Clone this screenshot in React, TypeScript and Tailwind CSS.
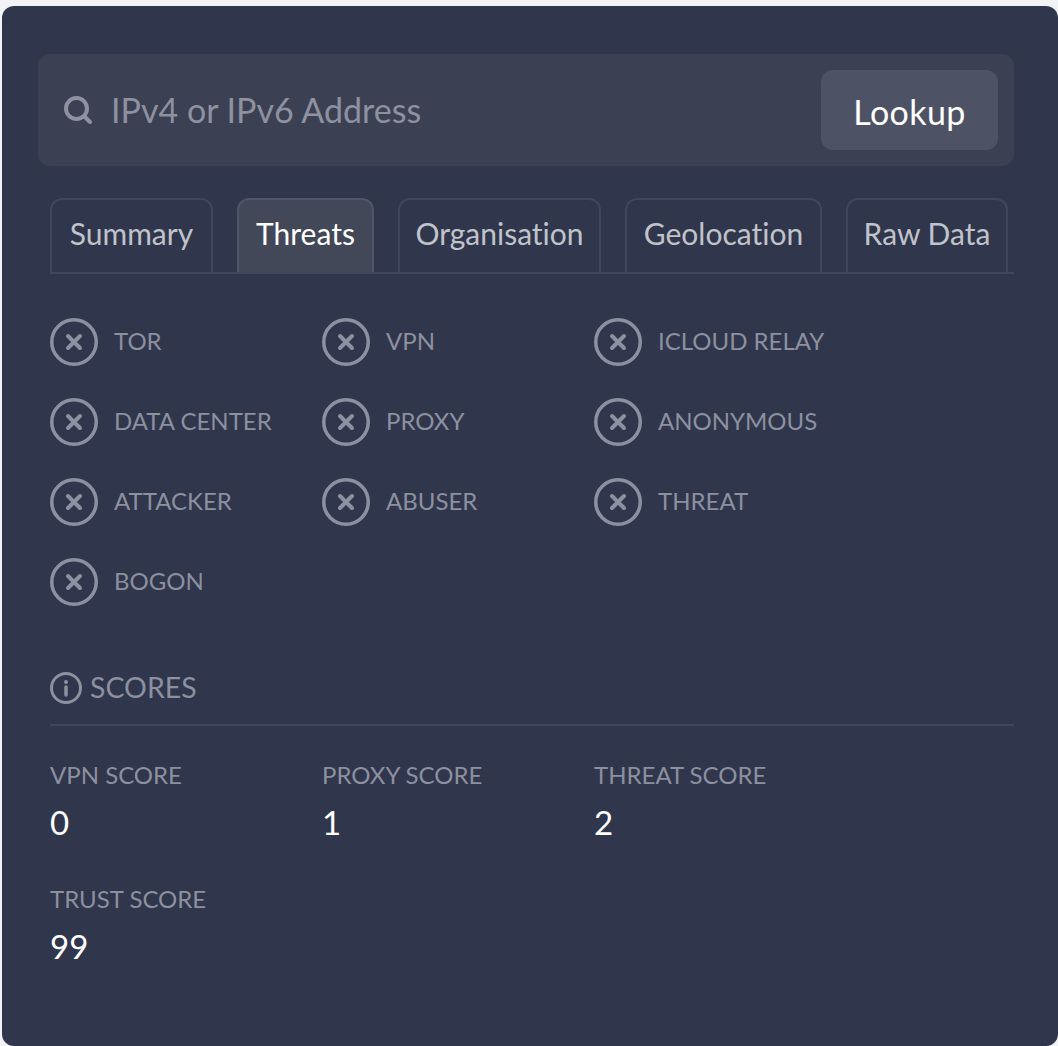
const FONT = "font-['Lato',sans-serif] [font-variant-ligatures:none]";

const tabs = [
  { name: 'Summary', width: 'w-[163px]' },
  { name: 'Threats', width: 'w-[137px]' },
  { name: 'Organisation', width: 'w-[203px]' },
  { name: 'Geolocation', width: 'w-[197px]' },
  { name: 'Raw Data', width: 'w-[162px]' },
];

const threats = [
  'TOR', 'VPN', 'ICLOUD RELAY',
  'DATA CENTER', 'PROXY', 'ANONYMOUS',
  'ATTACKER', 'ABUSER', 'THREAT',
  'BOGON',
];

const scores = [
  { label: 'VPN SCORE', value: 0 },
  { label: 'PROXY SCORE', value: 1 },
  { label: 'THREAT SCORE', value: 2 },
  { label: 'TRUST SCORE', value: 99 },
];

function CrossIcon() {
  return (
    <svg width="48" height="48" viewBox="0 0 48 48" fill="none" stroke="#8c909f" className="shrink-0">
      <circle cx="24" cy="24" r="22.25" strokeWidth="3.5" />
      <path d="M18 18l12 12M30 18L18 30" strokeWidth="4" strokeLinecap="round" />
    </svg>
  );
}

export default function App() {
  return (
    <div className={`${FONT} h-[1046px] w-[1058px] overflow-hidden bg-[#f1f3f7] pl-[2px] pt-[6px]`}>
      <div className="h-[1040px] rounded-[12px] bg-[#30364c] pl-[36px] pr-[44px] pt-[48px]">
        <div className="flex h-[112px] items-center justify-between rounded-[12px] bg-[#3b4053] pl-[26px] pr-[16px]">
          <div className="flex items-center gap-[19px]">
            <svg width="28" height="28" viewBox="0 0 28 28" fill="none" stroke="#8e919f" strokeWidth="4" strokeLinecap="round">
              <circle cx="12.5" cy="12.5" r="10.5" />
              <path d="M20.5 20.5l5.5 5.5" />
            </svg>
            <span className="text-[34px] leading-none text-[#8e919f]">IPv4 or IPv6 Address</span>
          </div>
          <button className="h-[80px] w-[177px] rounded-[12px] bg-[#4e5265] pt-[3px] text-[34px] tracking-[0.4px] text-white">Lookup</button>
        </div>

        <div className="mt-[32px] ml-[12px] flex h-[76px] gap-[24px] border-b-[2px] border-[#41465a]">
          {tabs.map((tab) => (
            <div
              key={tab.name}
              className={
                tab.name === 'Threats'
                  ? `${tab.width} h-[74px] rounded-t-[12px] border-[2px] border-b-0 border-[#505568] bg-[#434859] pt-[13px] text-center text-[30px] leading-[40px] text-white`
                  : `${tab.width} h-[74px] rounded-t-[12px] border-[2px] border-b-0 border-[#41465a] pt-[13px] text-center text-[30px] leading-[40px] text-[#c1c3ca]`
              }
            >
              {tab.name}
            </div>
          ))}
        </div>

        <div className="mt-[44px] ml-[12px] grid grid-cols-[272px_272px_272px] gap-y-[32px]">
          {threats.map((name) => (
            <div key={name} className="flex h-[48px] items-center gap-[16px]">
              <CrossIcon />
              <span className="mb-[3px] text-[24px] leading-none text-[#8c909f]">{name}</span>
            </div>
          ))}
        </div>

        <div className="ml-[12px] mt-[64px] flex items-center gap-[8px] border-b-[2px] border-[#41465a] pb-[18px]">
          <svg width="32" height="32" viewBox="0 0 32 32" fill="none" stroke="#8c909f" strokeWidth="3">
            <circle cx="16" cy="16" r="14.5" />
            <path d="M16 15v8" strokeWidth="3.5" strokeLinecap="round" />
            <circle cx="16" cy="10" r="2" fill="#8c909f" stroke="none" />
          </svg>
          <span className="mb-[1px] text-[28.5px] leading-[35px] text-[#8c909f]">SCORES</span>
        </div>

        <div className="ml-[12px] mt-[34px] grid grid-cols-[272px_272px_272px] gap-y-[24px]">
          {scores.map((s) => (
            <div key={s.label} className="h-[100px]">
              <div className="text-[24px] leading-[30px] text-[#8c909f]">{s.label}</div>
              <div className="mt-[12px] text-[33px] leading-[40px] text-white">{s.value}</div>
            </div>
          ))}
        </div>
      </div>
    </div>
  );
}
